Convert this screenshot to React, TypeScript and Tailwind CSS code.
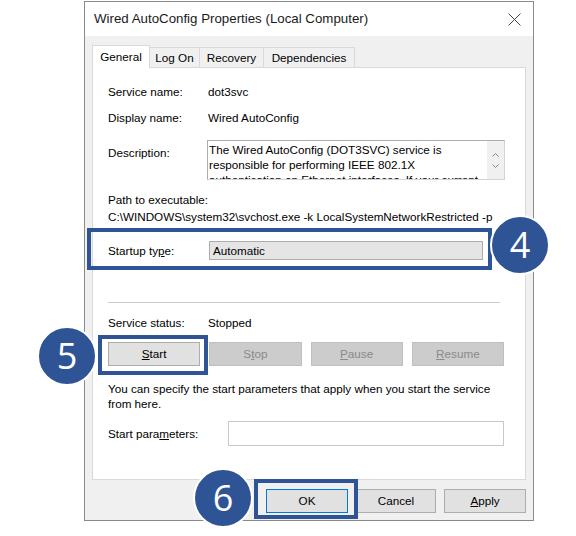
import React from "react";

function Btn({
  children,
  disabled,
  focused,
  className = "",
}: {
  children: React.ReactNode;
  disabled?: boolean;
  focused?: boolean;
  className?: string;
}) {
  return (
    <div
      className={`flex h-[24px] items-center justify-center border ${
        disabled
          ? "border-[#bfbfbf] bg-[#cccccc] text-[#8a8a8a]"
          : focused
          ? "border-[#0078d7] bg-[#e1e1e1] text-black"
          : "border-[#adadad] bg-[#e1e1e1] text-black"
      } ${className}`}
    >
      {children}
    </div>
  );
}

function Badge({ n, className }: { n: string; className: string }) {
  return (
    <div
      className={`absolute flex h-[60px] w-[60px] items-center justify-center rounded-full border-2 border-white bg-[#2f5496] font-['Open_Sans',sans-serif] text-[36px] leading-none text-white ${className}`}
    >
      {n}
    </div>
  );
}

export default function App() {
  return (
    <div className="relative h-[536px] w-[576px] overflow-hidden bg-white font-['Liberation_Sans',Arial,sans-serif] text-[11.7px] text-black">
      {/* dialog */}
      <div className="ml-[84px] mt-px flex h-[520px] w-[450px] flex-col border border-[#8a8a8a]">
        {/* title bar */}
        <div className="flex h-[34px] items-center justify-between bg-white pl-[9px] pr-[12px]">
          <span className="text-[13.3px] text-[#1a1a1a]">Wired AutoConfig Properties (Local Computer)</span>
          <svg width="13" height="13" viewBox="0 0 13 13" className="text-[#444]">
            <path d="M0.5 0.5 L12.5 12.5 M12.5 0.5 L0.5 12.5" stroke="currentColor" strokeWidth="1" />
          </svg>
        </div>

        {/* body */}
        <div className="flex flex-1 flex-col bg-[#f0f0f0] pl-[7px] pr-[7px]">
          {/* tabs */}
          <div className="mt-[8px] flex h-[23px] items-end">
            <div className="relative z-10 -mb-px flex h-[23px] w-[58px] items-center justify-center border border-b-0 border-[#d9d9d9] bg-white">
              General
            </div>
            <div className="flex h-[20px] w-[50px] items-center justify-center border border-b-0 border-l-0 border-[#d9d9d9] bg-[#f0f0f0]">
              Log On
            </div>
            <div className="flex h-[20px] w-[64px] items-center justify-center border border-b-0 border-l-0 border-[#d9d9d9] bg-[#f0f0f0]">
              Recovery
            </div>
            <div className="flex h-[20px] w-[91px] items-center justify-center border border-b-0 border-l-0 border-[#d9d9d9] bg-[#f0f0f0]">
              Dependencies
            </div>
          </div>

          {/* panel */}
          <div className="flex h-[413px] flex-col border border-[#d9d9d9] bg-white pl-[15px] pr-[20px]">
            <div className="mt-[14px] flex h-[20px] items-center">
              <span className="w-[100px]">Service name:</span>
              <span>dot3svc</span>
            </div>
            <div className="mt-[6px] flex h-[20px] items-center">
              <span className="w-[100px]">Display name:</span>
              <span>Wired AutoConfig</span>
            </div>
            <div className="mt-[12px] flex h-[40px] items-start">
              <span className="mt-[5px] w-[99px] leading-[16px]">Description:</span>
              <div className="flex h-[40px] flex-1 overflow-hidden border border-[#d4d4d4] border-t-[#acacac] border-l-[#acacac]">
                <div className="flex-1 overflow-hidden pl-[1px] pt-px leading-[15px]">
                  The Wired AutoConfig (DOT3SVC) service is
                  <br />
                  responsible for performing IEEE 802.1X
                  <br />
                  authentication on Ethernet interfaces. If your current
                </div>
                <div className="flex w-[17px] flex-col items-center justify-center gap-[7px] bg-[#f0f0f0]">
                  <svg width="7" height="4" viewBox="0 0 7 4">
                    <path d="M0.5 3.5 L3.5 0.5 L6.5 3.5" fill="none" stroke="#888" strokeWidth="1" />
                  </svg>
                  <svg width="7" height="4" viewBox="0 0 7 4">
                    <path d="M0.5 0.5 L3.5 3.5 L6.5 0.5" fill="none" stroke="#888" strokeWidth="1" />
                  </svg>
                </div>
              </div>
            </div>
            <div className="mt-[12px] h-[16px] leading-[16px]">Path to executable:</div>
            <div className="mt-px h-[16px] whitespace-nowrap leading-[16px]">
              C:\WINDOWS\system32\svchost.exe -k LocalSystemNetworkRestricted -p
            </div>
            <div className="mt-[16px] flex h-[19px] items-center">
              <span className="w-[101px]">
                Startup ty<span className="underline">p</span>e:
              </span>
              <div className="flex h-[19px] w-[274px] items-center border border-[#adadad] bg-[#e5e5e5] pl-[3px]">
                Automatic
              </div>
            </div>
            <div className="mt-[42px] h-px w-[392px] bg-[#c8c8c8]" />
            <div className="mt-[12px] flex h-[16px] items-center">
              <span className="w-[100px]">Service status:</span>
              <span>Stopped</span>
            </div>
            <div className="mt-[11px] grid w-[396px] grid-cols-4 gap-[9px]">
              <Btn>
                <span className="underline">S</span>tart
              </Btn>
              <Btn disabled>
                S<span className="underline">t</span>op
              </Btn>
              <Btn disabled>
                <span className="underline">P</span>ause
              </Btn>
              <Btn disabled>
                <span className="underline">R</span>esume
              </Btn>
            </div>
            <div className="mt-[15px] leading-[15px]">
              You can specify the start parameters that apply when you start the service
              <br />
              from here.
            </div>
            <div className="mt-[10px] flex h-[25px] items-center">
              <span className="w-[120px]">
                Start para<span className="underline">m</span>eters:
              </span>
              <div className="h-[25px] w-[276px] border border-[#c8c8c8] bg-white" />
            </div>
          </div>

          {/* bottom buttons */}
          <div className="mt-[9px] flex justify-end gap-[8px]">
            <Btn focused className="w-[82px]">
              OK
            </Btn>
            <Btn className="w-[80px]">Cancel</Btn>
            <Btn className="w-[82px]">
              <span className="underline">A</span>pply
            </Btn>
          </div>
        </div>
      </div>

      {/* annotations */}
      <div className="absolute left-[87px] top-[228px] h-[42px] w-[405px] border-[4px] border-[#2f5496]" />
      <div className="absolute left-[98px] top-[335px] h-[40px] w-[110px] border-[4px] border-[#2f5496]" />
      <div className="absolute left-[254px] top-[479px] h-[40px] w-[104px] border-[4px] border-[#2f5496]" />
      <Badge n="4" className="left-[490px] top-[215px]" />
      <Badge n="5" className="left-[37px] top-[326px]" />
      <Badge n="6" className="left-[193px] top-[468px]" />
    </div>
  );
}
